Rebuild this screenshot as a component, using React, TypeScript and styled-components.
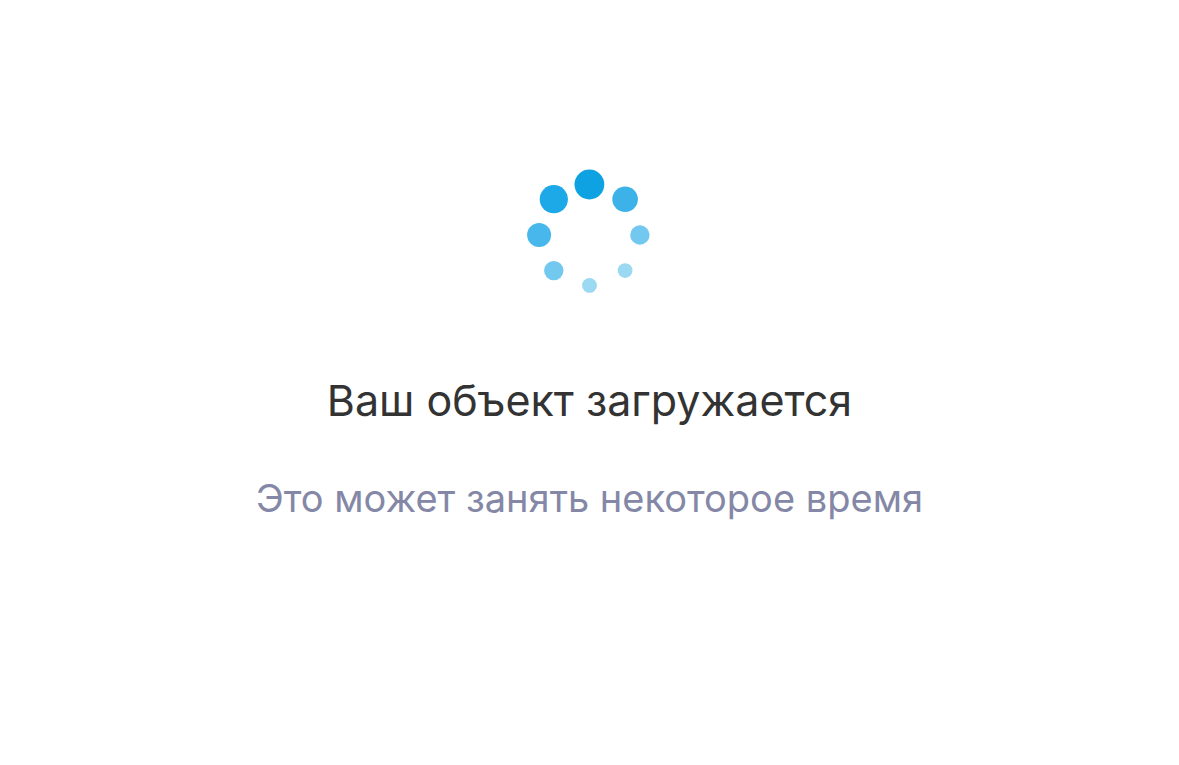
import React from "react";
import styled, { createGlobalStyle } from "styled-components";

const GlobalStyle = createGlobalStyle`
  body {
    margin: 0;
    background: #ffffff;
    font-family: Inter, "Liberation Sans", sans-serif;
  }
`;

const Screen = styled.main`
  box-sizing: border-box;
  min-height: 100vh;
  padding: 168px 24px 24px;
  display: flex;
  flex-direction: column;
  align-items: center;
  text-align: center;
`;

const Spinner = styled.svg`
  display: block;
  width: 127px;
  height: 126px;
`;

const Title = styled.h1`
  margin: 78px 0 0;
  font-size: 43px;
  line-height: 56px;
  font-weight: 400;
  color: #333333;
`;

const Note = styled.p`
  margin: 46px 0 0;
  font-size: 38px;
  line-height: 48px;
  color: #8488a6;
`;

const dots = [
  { x: 63.4, y: 16.5, r: 14.9, fill: "#0ea2e3" },
  { x: 99.1, y: 31.2, r: 12.8, fill: "#3cb2e8" },
  { x: 113.9, y: 67, r: 9.7, fill: "#72c8ef" },
  { x: 99.1, y: 102.6, r: 7.4, fill: "#9bd8f2" },
  { x: 63.5, y: 117.4, r: 7.4, fill: "#9bd8f2" },
  { x: 27.8, y: 102.6, r: 9.7, fill: "#72c8ef" },
  { x: 13.1, y: 67, r: 12, fill: "#48b8ec" },
  { x: 27.8, y: 31.2, r: 14.1, fill: "#1da9e7" },
];

export default function App() {
  return (
    <>
      <GlobalStyle />
      <Screen>
        <Spinner viewBox="0 0 127 126" aria-hidden="true">
          {dots.map((dot) => (
            <circle key={`${dot.x}-${dot.y}`} cx={dot.x} cy={dot.y} r={dot.r} fill={dot.fill} />
          ))}
        </Spinner>
        <Title>Ваш объект загружается</Title>
        <Note>Это может занять некоторое время</Note>
      </Screen>
    </>
  );
}
